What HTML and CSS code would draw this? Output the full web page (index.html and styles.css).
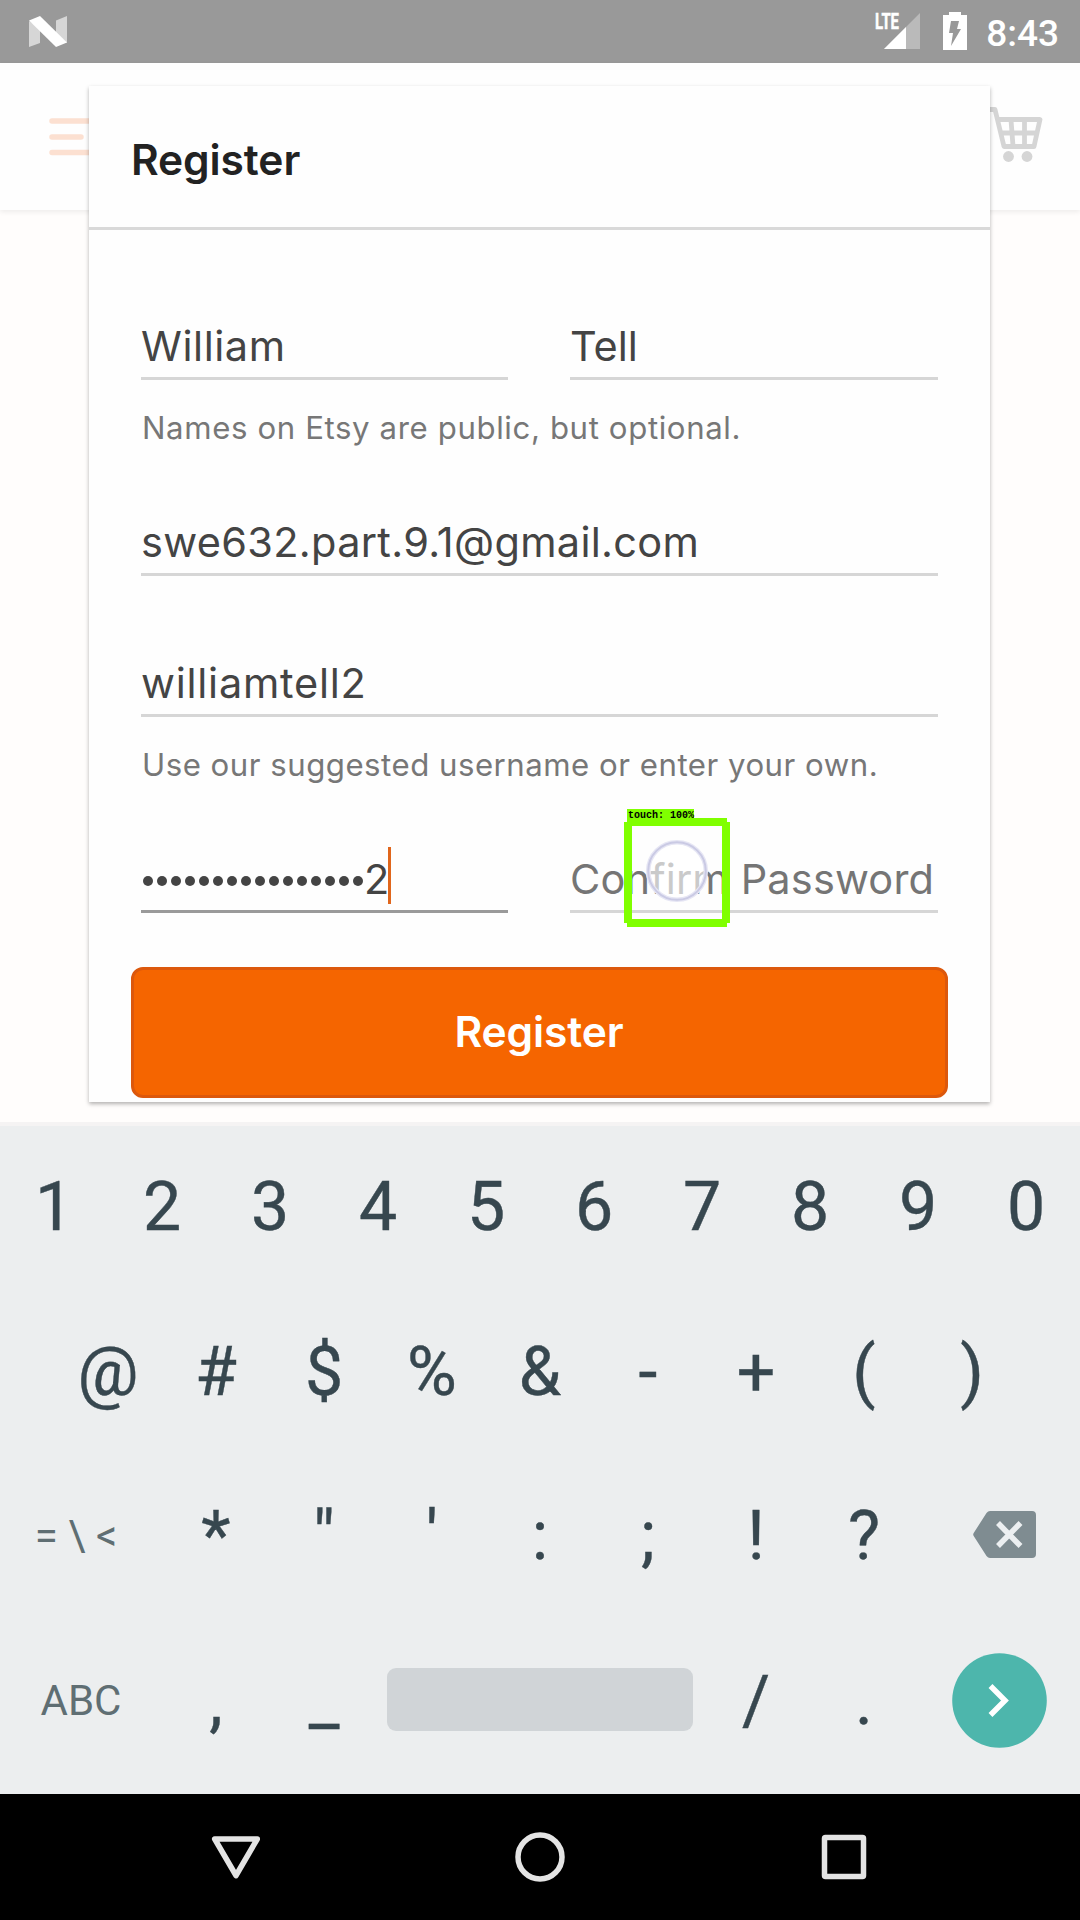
FILE: index.html
```html
<!DOCTYPE html>
<html lang="en">
<head>
<meta charset="utf-8">
<title>Register</title>
<link rel="stylesheet" href="styles.css">
</head>
<body>
<div class="screen">
  <header class="status-bar">
    <svg class="status-n" viewBox="0 0 38 32" width="38" height="32"><path d="M0 5v26l11-4V12z" fill="#d6d6d6"/><path d="M27 4.500 38 0v27l-11-10z" fill="#d6d6d6"/><path d="M0 4.500 11 0l27 26.500L27 31z" fill="#fff"/></svg>
    <div class="status-right">
      <svg class="signal" viewBox="0 0 46 38" width="46" height="38"><path d="M45 0v36H9z" fill="#bababa"/><path d="M31 14v22H9z" fill="#fff"/><text class="lte" x="0" y="16" textLength="24" lengthAdjust="spacingAndGlyphs">LTE</text></svg>
      <svg class="battery" viewBox="0 0 24 38" width="24" height="38"><path d="M6 0h12v3h6v35H0V3h6z" fill="#fff"/><path d="M8 9h8l-2 8h4L8 34l2-13H6z" fill="#999"/></svg>
      <span class="clock">8:43</span>
    </div>
  </header>

  <main class="app">
    <div class="app-bar">
      <svg class="menu" viewBox="0 0 48 38" width="48" height="38" stroke="#fce0d1" stroke-width="5.500" stroke-linecap="round"><path d="M3 3h42M3 19h29M3 34.500h42"/></svg>
      <svg class="cart" viewBox="0 0 64 58" width="64" height="58" fill="none" stroke="#d5d5d5" stroke-width="4.800" stroke-linejoin="round" stroke-linecap="round"><path d="M5 3.500h10l9 37h30l6-27H18M21 27h36M31 14l2 26M44.500 14v26"/><g fill="#d5d5d5" stroke="none"><circle cx="28.500" cy="50.500" r="5.400"/><circle cx="47" cy="50.500" r="5.400"/></g></svg>
    </div>

    <section class="dialog">
      <div class="dialog-head"><h1 class="title">Register</h1></div>
      <form class="form">
        <div class="pair">
          <div class="field"><span class="first">William</span></div>
          <div class="field"><span>Tell</span></div>
        </div>
        <p class="hint">Names on Etsy are public, but optional.</p>
        <div class="field email-field">swe632.part.9.1@gmail.com</div>
        <div class="field user-field">williamtell2</div>
        <p class="hint hint-user">Use our suggested username or enter your own.</p>
        <div class="pair passwords">
          <div class="field focused"><span class="dots"><i></i><i></i><i></i><i></i><i></i><i></i><i></i><i></i><i></i><i></i><i></i><i></i><i></i><i></i><i></i><i></i></span><span>2</span><b class="caret"></b></div>
          <div class="field empty">Confirm Password</div>
        </div>
        <button class="submit" type="button">Register</button>
      </form>
    </section>
  </main>

  <section class="keyboard">
    <div class="row digits"><span>1</span><span>2</span><span>3</span><span>4</span><span>5</span><span>6</span><span>7</span><span>8</span><span>9</span><span>0</span></div>
    <div class="row symbols"><span>@</span><span>#</span><span>$</span><span>%</span><span>&amp;</span><span>-</span><span>+</span><span>(</span><span>)</span></div>
    <div class="row"><span class="mode more">= \ &lt;</span><span>*</span><span>"</span><span>'</span><span>:</span><span>;</span><span>!</span><span>?</span>
      <span class="erase"><svg viewBox="0 0 63 47" width="63" height="47"><path d="M17 0h42q4 0 4 4v39q0 4-4 4H17q-2 0-3.500-2L.7 25q-1-1.500 0-3L13.500 2Q15 0 17 0z" fill="#7f8c91"/><path d="M25 12l22.500 23M47.500 12L25 35" stroke="#eceff1" stroke-width="5.500"/></svg></span></div>
    <div class="row"><span class="mode">ABC</span><span>,</span><span>_</span><span class="space"><i></i></span><span>/</span><span>.</span>
      <span class="go"><svg viewBox="0 0 95 95" width="95" height="95"><circle cx="47.500" cy="47.500" r="47.300" fill="#4db6ac"/><path d="M38.500 33 53 47.500 38.500 62" fill="none" stroke="#fff" stroke-width="5.500"/></svg></span></div>
  </section>

  <nav class="nav-bar">
    <svg viewBox="0 0 50 50" width="50" height="50"><path d="M3.700 7h42.600L25 43.500z"/></svg>
    <svg viewBox="0 0 50 50" width="50" height="50"><circle cx="25" cy="25" r="22"/></svg>
    <svg viewBox="0 0 50 50" width="50" height="50"><rect x="5.500" y="5.500" width="39" height="39" rx="1"/></svg>
  </nav>

  <div class="touch">
    <svg viewBox="0 0 106 109" width="106" height="109"><path d="M3 4h100M3 105h100" stroke="#80ff00" stroke-width="8"/><path d="M4 4v101M102 4v101" stroke="#80ff00" stroke-width="8"/><circle cx="53" cy="53" r="28.800" fill="#fff" fill-opacity=".62" stroke="#e6e6f4" stroke-width="4.500"/><circle cx="53" cy="53" r="28.800" fill="none" stroke="#cacae4" stroke-width="2"/></svg>
    <span class="touch-label">touch: 100%</span>
  </div>
</div>
</body>
</html>
```
FILE: styles.css
```css
* { box-sizing: border-box; }
body { margin: 0; }
.screen { position: relative; width: 1080px; height: 1920px; overflow: hidden; display: flex; flex-direction: column; font-family: Inter, "Liberation Sans", sans-serif; background: #fffdfc; }

.status-bar { height: 63px; flex: none; background: #999; display: flex; justify-content: space-between; padding: 0 21px 0 29px; }
.status-n { margin-top: 16px; }
.status-right { display: flex; }
.signal { margin: 13px 0 0 0; overflow: visible; }
.lte { font: 700 22px Roboto, sans-serif; fill: #fff; stroke: #fff; stroke-width: .5px; }
.battery { margin: 12px 0 0 22px; }
.clock { margin: 0 0 0 19px; font: 500 37px/67px Roboto, sans-serif; color: #fff; }

.app { position: relative; height: 1059px; flex: none; }
.app-bar { height: 147px; background: #fefefe; box-shadow: 0 2px 5px rgba(0,0,0,.07); display: flex; justify-content: space-between; padding: 43px 36px 0 49px; }
.menu { margin-top: 12px; }
.cart { overflow: visible; }

.dialog { position: absolute; left: 89px; top: 23px; width: 901px; height: 1016px; background: #fefefe; box-shadow: 0 2px 4px rgba(0,0,0,.3); }
.dialog-head { height: 144px; border-bottom: 3px solid #d9d9d9; padding: 44px 0 0 42px; }
.title { margin: 0; font-size: 42.500px; line-height: 60px; font-weight: 600; letter-spacing: -.1px; color: #222; }
.form { padding: 85px 42px 0 42px; }
.pair { display: flex; justify-content: space-between; padding: 0 10px; }
.field { height: 65px; border-bottom: 3px solid #d6d6d6; font-size: 41.500px; line-height: 62px; color: #444; white-space: nowrap; display: flex; }
.pair .field { width: 367px; }
.pair .field:last-child { width: 368px; }
.first { letter-spacing: .55px; }
.email-field { margin: 64px 10px 0; letter-spacing: .3px; }
.user-field { margin: 76px 10px 0; letter-spacing: .75px; }
.hint { margin: 27px 11px 0; font-size: 31.200px; line-height: 42px; height: 40px; letter-spacing: .61px; color: #777; white-space: nowrap; }
.hint-user { letter-spacing: .5px; }
.passwords { margin-top: 64px; }
.focused { border-color: #9a9a9a; }
.empty { color: #757575; letter-spacing: .16px; }
.dots { display: flex; gap: 4px; align-items: center; margin: 4px 1px 0 2px; }
.dots i { width: 10px; height: 10px; border-radius: 50%; background: #444; }
.caret { width: 3px; height: 57px; margin: -1px 0 0 -1px; background: #e0661c; }
.submit { display: block; width: 817px; height: 131px; margin-top: 54px; padding: 0 1px 3px 0; border: 3px solid #dc580c; border-radius: 12px; background: #f56500; color: #fff; font: 600 42.500px Inter, sans-serif; letter-spacing: -.1px; }

.keyboard { height: 672px; flex: none; background: #eceeef; border-top: 4px solid #f5f3f3; font: 68px/166px Roboto, sans-serif; color: #37474f; -webkit-text-stroke: .4px #37474f; }
.row { height: 165px; display: flex; }
.digits { margin-top: -3px; }
.digits, .symbols { line-height: 168px; }
.row > span { width: 108px; text-align: center; }
.symbols { justify-content: center; }
.row > .mode { width: 162px; font-size: 42px; color: #5f6e73; -webkit-text-stroke: 0; }
.row > .more { padding-right: 10px; }
.row > .erase, .row > .go { width: 162px; display: flex; align-items: center; justify-content: center; }
.row > .go { padding: 0 0 1px 0; }
.row > .erase { padding-left: 11px; padding-bottom: 2px; }
.row > .space { width: 324px; display: flex; align-items: center; justify-content: center; padding-bottom: 2px; }
.space i { width: 306px; height: 63px; border-radius: 9px; background: #d0d4d7; }

.nav-bar { height: 126px; flex: none; background: #000; display: flex; justify-content: space-between; padding: 38px 211px 0; }
.nav-bar svg { fill: none; stroke: #e4e4e4; stroke-width: 5.500; stroke-linejoin: round; }

.touch { position: absolute; left: 624px; top: 818px; }
.touch svg { display: block; }
.touch-label { position: absolute; left: 3px; top: -9px; width: 67px; height: 11px; padding-left: 1px; background: #80ff00; color: #000; font: 700 10px/13px "Liberation Mono", monospace; white-space: nowrap; }
```
